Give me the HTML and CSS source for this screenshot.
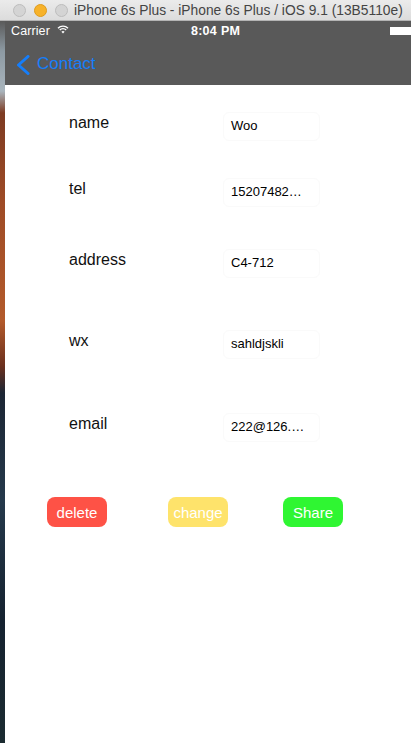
FILE: index.html
```html
<!DOCTYPE html>
<html>
<head>
<meta charset="utf-8">
<link rel="stylesheet" href="styles.css">
</head>
<body>
<div class="window">
  <div class="titlebar">
    <span class="light light-gray"></span>
    <span class="light light-orange"></span>
    <span class="light light-gray"></span>
    <span class="title">iPhone 6s Plus - iPhone 6s Plus / iOS 9.1 (13B5110e)</span>
  </div>
  <div class="main">
    <div class="desk"></div>
    <div class="phone">
      <div class="bars">
        <div class="statusbar">
          <span class="carrier">Carrier</span>
          <svg class="wifi" width="12" height="9" viewBox="0 0 12 9">
            <path d="M1 3.2 A7 7 0 0 1 11 3.2" fill="none" stroke="#fff" stroke-width="1.4"/>
            <path d="M2.8 5 A4.4 4.4 0 0 1 9.2 5" fill="none" stroke="#fff" stroke-width="1.4"/>
            <path d="M4.4 6.8 A2.2 2.2 0 0 1 7.6 6.8 L6 8.6 Z" fill="#fff"/>
          </svg>
          <span class="time">8:04 PM</span>
          <span class="battery"></span>
        </div>
        <div class="navbar">
          <svg class="chevron" width="14" height="20" viewBox="0 0 14 20">
            <polyline points="12,1.5 2.5,10 12,18.5" fill="none" stroke="#157efb" stroke-width="3" stroke-linecap="round" stroke-linejoin="round"/>
          </svg>
          <span class="back">Contact</span>
        </div>
      </div>
      <div class="content">
        <div class="row">
          <span class="label">name</span>
          <span class="field">Woo</span>
        </div>
        <div class="row row-tel">
          <span class="label">tel</span>
          <span class="field">15207482…</span>
        </div>
        <div class="row row-address">
          <span class="label">address</span>
          <span class="field">C4-712</span>
        </div>
        <div class="row row-wx">
          <span class="label">wx</span>
          <span class="field">sahldjskli</span>
        </div>
        <div class="row row-email">
          <span class="label">email</span>
          <span class="field">222@126.…</span>
        </div>
        <div class="actions">
          <span class="btn btn-delete">delete</span>
          <span class="btn btn-change">change</span>
          <span class="btn btn-share">Share</span>
        </div>
      </div>
    </div>
  </div>
</div>
</body>
</html>
```
FILE: styles.css
```css
html, body {
  margin: 0;
  padding: 0;
  background: #ffffff;
}
body {
  width: 411px;
  height: 743px;
  overflow: hidden;
  font-family: "Liberation Sans", Arial, sans-serif;
}
.window {
  display: flex;
  flex-direction: column;
  height: 743px;
}
.titlebar {
  height: 20px;
  flex: none;
  display: flex;
  align-items: center;
  padding-left: 13px;
  background: linear-gradient(#ebebeb, #dcdcdc);
  border-bottom: 1px solid #b4b4b4;
  white-space: nowrap;
  overflow: hidden;
}
.light {
  width: 11px;
  height: 11px;
  border-radius: 50%;
  margin-right: 8px;
  flex: none;
}
.light-gray {
  background: #d4d4d4;
  border: 0.5px solid #bdbdbd;
}
.light-orange {
  background: #f7b22a;
  border: 0.5px solid #de9b1c;
}
.title {
  margin-left: -2px;
  font-size: 13.8px;
  color: #444444;
}
.main {
  flex: 1;
  display: flex;
}
.desk {
  width: 5px;
  flex: none;
  background: linear-gradient(#5a5a5a 0px, #8d9aa3 30px, #a9b5bd 70px, #7d3b22 92px, #9e4b26 180px, #b35a2b 300px, #6b301e 345px, #1c2634 372px, #25394b 480px, #152230 600px, #1b2b31 722px);
}
.phone {
  flex: 1;
  display: flex;
  flex-direction: column;
}
.bars {
  background: #595959;
}
.statusbar {
  height: 19px;
  display: flex;
  align-items: center;
  padding-left: 6px;
  color: #ffffff;
  font-size: 12.5px;
}
.carrier {
  letter-spacing: 0.1px;
}
.wifi {
  margin-left: 7px;
  margin-top: -2px;
}
.time {
  margin-left: 122px;
  font-weight: bold;
  font-size: 12.5px;
  letter-spacing: 0.3px;
}
.battery {
  margin-left: auto;
  width: 21px;
  height: 8px;
  background: #ffffff;
  margin-top: 1px;
}
.navbar {
  height: 45px;
  display: flex;
  align-items: center;
  padding-left: 11px;
  padding-top: 4px;
  box-sizing: border-box;
}
.chevron {
  flex: none;
}
.back {
  margin-left: 7px;
  font-size: 17px;
  color: #157efb;
  margin-top: -1px;
}
.content {
  flex: 1;
  padding-top: 27px;
  background: #ffffff;
}
.row {
  display: flex;
  align-items: flex-start;
  height: 28px;
}
.row-tel { margin-top: 38px; }
.row-address { margin-top: 43px; }
.row-wx { margin-top: 53px; }
.row-email { margin-top: 55px; }
.label {
  margin-left: 64px;
  width: 154px;
  font-size: 16px;
  line-height: 20px;
  margin-top: 1px;
  color: #111111;
}
.field {
  box-sizing: border-box;
  width: 97px;
  height: 29px;
  border: 1px solid #fafafa;
  border-radius: 6px;
  padding-left: 7px;
  font-size: 13px;
  line-height: 25px;
  color: #000000;
  white-space: nowrap;
  overflow: hidden;
}
.actions {
  display: flex;
  margin-top: 56px;
  padding-left: 42px;
}
.btn {
  width: 60px;
  height: 30px;
  border-radius: 8px;
  display: flex;
  align-items: center;
  justify-content: center;
  color: #ffffff;
  font-size: 15px;
}
.btn-delete { background: #fe5246; }
.btn-change { background: #fee36b; margin-left: 61px; }
.btn-share { background: #2ff632; margin-left: 55px; }
```
